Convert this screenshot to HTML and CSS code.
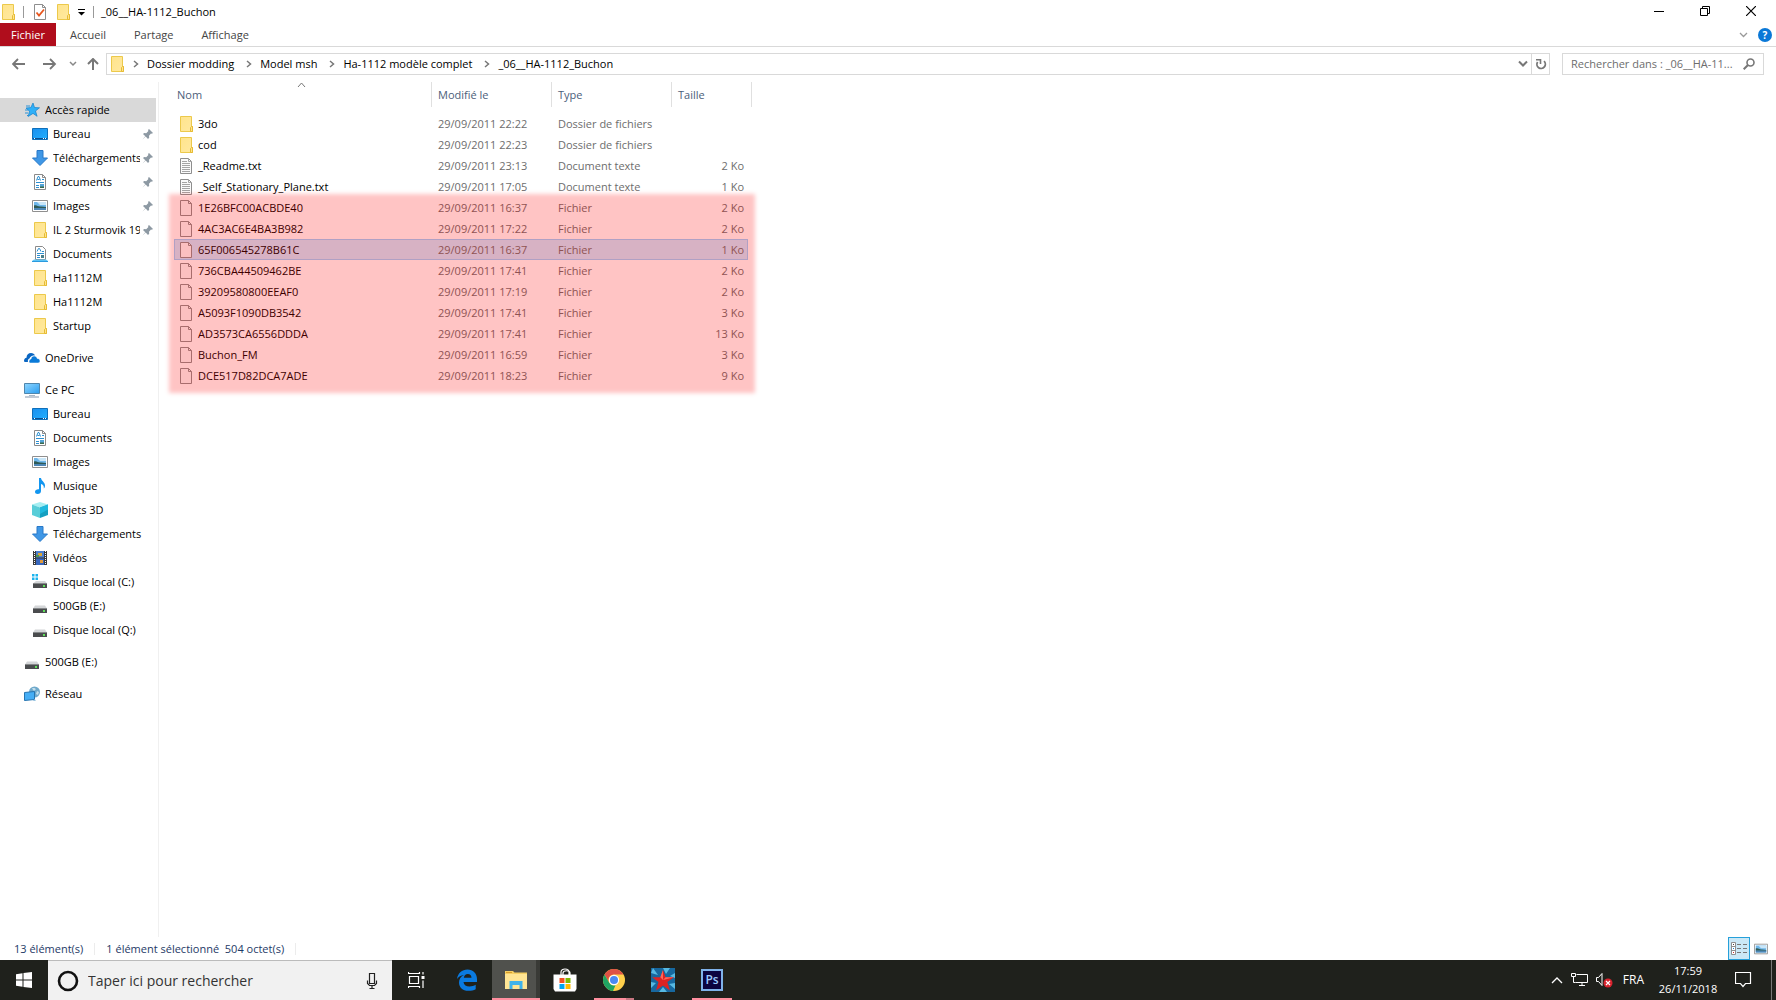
FILE: index.html
```
<!DOCTYPE html>
<html lang="fr">
<head>
    <meta charset="UTF-8">
    <meta name="viewport" content="width=device-width, initial-scale=1.0">
    <title>_06__HA-1112_Buchon</title>
    <link rel="stylesheet" href="styles.css">
</head>
<body>
    <!-- shared icons -->
    <svg class="sprite" aria-hidden="true">
        <defs>
            <linearGradient id="g-folder" x1="0" y1="0" x2="1" y2="1"><stop offset="0" stop-color="#ffe48c"/><stop offset="1" stop-color="#ffe9a0"/></linearGradient>
            <linearGradient id="g-screen" x1="0" y1="0" x2="1" y2="1"><stop offset="0" stop-color="#1a8fee"/><stop offset="1" stop-color="#22b0ff"/></linearGradient>
            <linearGradient id="g-pc" x1="0" y1="0" x2="1" y2="1"><stop offset="0" stop-color="#8fd6ff"/><stop offset="1" stop-color="#2a9df0"/></linearGradient>
        </defs>
        <symbol id="folder" viewBox="0 0 16 16">
            <path d="M2.5.5h11v10h1v5h-12z" fill="url(#g-folder)" stroke="#ecc94b"/>
            <path d="M12.5 15.5v-4l1-1h1v5z" fill="#ffe48c" stroke="#e6bb35"/>
        </symbol>
        <symbol id="file" viewBox="0 0 16 16">
            <path d="M2.5.5h8l3 3v12h-11z" fill="#fafafa" stroke="#8e8e8e"/>
            <path d="M10.5.5v3h3" fill="none" stroke="#8e8e8e"/>
        </symbol>
        <symbol id="text" viewBox="0 0 16 16">
            <path d="M2.5.5h8l3 3v12h-11z" fill="#fafafa" stroke="#8e8e8e"/>
            <path d="M10.5.5v3h3M4 3.5h5M4 5.5h8M4 7.5h8M4 9.5h8M4 11.5h8M4 13.5h8" fill="none" stroke="#a4a4a4"/>
        </symbol>
        <symbol id="star" viewBox="0 0 16 16">
            <path d="M9 1l1.500 4.500 5 .3-4 3.200 1.600 5.300L9 11.400 4.200 14.500l1.300-5.300L2 6l4.800-.4z" fill="#2fb0f8" stroke="#1680c8" stroke-width=".7"/>
            <path d="M2 4h4M1 8h3M1 11h3M3 13.500h1.500" stroke="#2d93d8" fill="none"/>
        </symbol>
        <symbol id="desktop" viewBox="0 0 16 16">
            <path d="M.5 2.500h15v11H.5z" fill="url(#g-screen)" stroke="#0f6fba"/>
            <path d="M1 12.500h14" stroke="#0a4f90"/>
            <path d="M2 12.500h1M11 12.500h1M13 12.500h1" stroke="#fff"/>
        </symbol>
        <symbol id="download" viewBox="0 0 16 16">
            <path d="M5 .5h6v7.500h4.500L8 15.500.5 8H5z" fill="#3f97e6" stroke="#2878c8"/>
        </symbol>
        <symbol id="document" viewBox="0 0 16 16">
            <path d="M2.500.5h8l3 3v12h-11z" fill="#fff" stroke="#8a8a8a"/>
            <path d="M10.500.5v3h3" fill="none" stroke="#8a8a8a"/>
            <path d="M4.500 6.500l1.500-4h1l1.500 4M5.500 5.500h2M10 5.500h2M4 8.500h8M4 11.500h3M4 13.500h3" fill="none" stroke="#2d8fd0"/>
            <path d="M8 10h4v4H8z" fill="#54a4d8"/><path d="M8 12.500h4V14H8z" fill="#3b6a4d"/>
        </symbol>
        <symbol id="document-lib" viewBox="0 0 16 16">
            <path d="M3.500.5h7l3 3v10h-10z" fill="#fff" stroke="#8a8a8a"/>
            <path d="M5 5.500l1.500-3h1l1.500 3M10 5.500h2M5 7.500h7M5 9.500h3M5 11.500h3" fill="none" stroke="#2d8fd0"/>
            <path d="M9 9h3v3H9z" fill="#4a7f8a"/>
            <path d="M2 13.500h12l2 1.500H0z" fill="#5cc4f6"/><path d="M0 15.500h16" stroke="#2b9ade"/>
        </symbol>
        <symbol id="picture" viewBox="0 0 16 16">
            <path d="M.5 2.500h15v11H.5z" fill="#fff" stroke="#8f8f8f"/>
            <path d="M2 4h12v8H2z" fill="#6fb7ea"/>
            <path d="M5 4h9v3H8z" fill="#c9e6f8"/>
            <path d="M2 7.500c3-1 4 1.500 7 1l5 .5v1H2z" fill="#2e5a56"/>
            <path d="M2 10h12v2H2z" fill="#4d86b5"/>
        </symbol>
        <symbol id="onedrive" viewBox="0 0 16 16">
            <path d="M0 11c0-2 1-3 2.500-3.200C2.500 5 4.500 3 7 3c2 0 3.500 1 4 2.500-3-.5-5 1-5.500 3C4 9 3.500 10.500 4 12H1.500C.5 12 0 11.500 0 11z" fill="#0a66c2"/>
            <path d="M5 11.500c0-1.500 1-2.500 2-2.500.2-2 1.600-3 3.200-3 1.500 0 2.600 1 3 2.500C15 8.500 16 9.500 16 11c0 1.300-.8 2-2 2H6.800C5.700 13 5 12.500 5 11.500z" fill="#0a7ad8" stroke="#fff" stroke-width=".5"/>
        </symbol>
        <symbol id="pc" viewBox="0 0 16 16">
            <path d="M.5 1.500h15v10H.5z" fill="url(#g-pc)" stroke="#4f86ad"/>
            <path d="M5 13h6v1H5z" fill="#a9b8c6"/>
            <path d="M1 15h14" stroke="#8496ac"/>
        </symbol>
        <symbol id="music" viewBox="0 0 16 16">
            <path d="M7 0h2c.3 3 4 4 4 7.500 0 1.500-.6 2.500-1.200 3 .4-2.500-.8-4-2.800-4.500v7c0 1.800-1.400 3-3.300 3C4 16 3 15.200 3 13.800 3 12 5 11 7 11.300z" fill="#1296f0"/>
        </symbol>
        <symbol id="cube" viewBox="0 0 16 16">
            <path d="M8 0l8 2.500-8 3-8-3z" fill="#a5eef2"/>
            <path d="M0 2.500l8 3V16l-8-3z" fill="#58cdd8"/>
            <path d="M16 2.500l-8 3V16l8-3z" fill="#159fc0"/>
            <path d="M8 5.500l8-3v5L8 12z" fill="#1fb9de"/>
        </symbol>
        <symbol id="video" viewBox="0 0 16 16">
            <path d="M1 1h14v14H1z" fill="#3a3a3a"/>
            <path d="M4 1h8v6.500H4z" fill="#4c7fd0"/><path d="M4 8.500h8V15H4z" fill="#3766bd"/>
            <path d="M6 3h4v3H6z" fill="#d9a536"/><path d="M4 5h3v2H4z" fill="#4b9850"/><path d="M8 10h3v3H8z" fill="#e09a3e"/>
            <path d="M2.500 1v14M13.500 1v14" stroke="#fff" stroke-dasharray="1 1"/>
        </symbol>
        <symbol id="drive" viewBox="0 0 16 16">
            <path d="M3 7.500h10l2 3H1z" fill="#d4d6d8"/>
            <path d="M1 10.500h14V15H1z" fill="#4a4c4e"/>
            <path d="M1 10.500h14" stroke="#85888a"/>
            <path d="M11 12h2v2h-2z" fill="#5fe05a"/>
        </symbol>
        <symbol id="drive-win" viewBox="0 0 16 16">
            <path d="M4 7h9l2 2.500H1z" fill="#d4d6d8"/>
            <path d="M1 9.500h14V14H1z" fill="#4a4c4e"/>
            <path d="M1 9.500h14" stroke="#85888a"/>
            <path d="M11 11h2v2h-2z" fill="#5fe05a"/>
            <path d="M0 0h2.500v2.500H0zM3.500 0H6v2.500H3.500zM0 3.500h2.500V6H0zM3.500 3.500H6V6H3.500z" fill="#1cb4ee"/>
        </symbol>
        <symbol id="network" viewBox="0 0 16 16">
            <circle cx="10.500" cy="6" r="5.500" fill="#6fa9cb"/>
            <path d="M8 2.500c2-1 3 0 4 .5l-2 2zM13 5l2 1-1 3-2-1z" fill="#c5dfec"/>
            <path d="M.5 6.500l10-1v8l-10 1z" fill="#45aef5" stroke="#2674b0"/>
            <path d="M10.500 13l1.500 1.500-3 .5" fill="#7ab2d8"/>
        </symbol>
        <symbol id="pin" viewBox="0 0 12 12">
            <path d="M7 1l4 4-1.200.8L9 5.600 7 7.800l.2 2L6 11 3.700 8.600.5 11.500l2.800-3.300L1 6l1.200-1 2 .2L6.400 3 6 2z" fill="#8d99a3"/>
        </symbol>
        <symbol id="chevron" viewBox="0 0 6 8">
            <path d="M1 1l3.500 3L1 7" fill="none" stroke="#777" stroke-width="1.500"/>
        </symbol>
    </svg>

    <div class="explorer">
        <header class="titlebar">
            <div class="quick-access">
                <svg class="icon"><use href="#folder"/></svg>
                <span class="bar"></span>
                <button class="plain" aria-label="Propriétés">
                    <svg class="icon" viewBox="0 0 16 16"><path d="M2.500.5h8l3 3v12h-11z" fill="#fff" stroke="#8e8e8e"/><path d="M10.500.5v3h3" fill="none" stroke="#8e8e8e"/><path d="M4.500 8.500l2.500 3 5-6" fill="none" stroke="#e8561e" stroke-width="1.800"/></svg>
                </button>
                <button class="plain" aria-label="Nouveau dossier"><svg class="icon"><use href="#folder"/></svg></button>
                <button class="plain" aria-label="Personnaliser">
                    <svg width="8" height="8" viewBox="0 0 8 8"><path d="M0 1.500h7" stroke="#000"/><path d="M0 4h7L3.500 7.500z"/></svg>
                </button>
                <span class="bar"></span>
            </div>
            <h1>_06__HA-1112_Buchon</h1>
            <div class="window-buttons">
                <button aria-label="Réduire"><svg width="10" height="10"><path d="M0 5.500h10" stroke="#000"/></svg></button>
                <button aria-label="Restaurer"><svg width="10" height="10"><path d="M.5 2.500h7v7h-7zM2.500 2.500v-2h7v7h-2" fill="none" stroke="#000"/></svg></button>
                <button aria-label="Fermer"><svg width="10" height="10"><path d="M0 0l10 10M10 0L0 10" stroke="#000" stroke-width="1.200"/></svg></button>
            </div>
        </header>

        <div class="ribbon">
            <button class="tab file-tab">Fichier</button>
            <button class="tab">Accueil</button>
            <button class="tab">Partage</button>
            <button class="tab">Affichage</button>
            <div class="ribbon-right">
                <button class="plain" aria-label="Développer le ruban"><svg width="9" height="6"><path d="M1 1l3.500 3.500L8 1" fill="none" stroke="#999" stroke-width="1.300"/></svg></button>
                <button class="help" aria-label="Aide">?</button>
            </div>
        </div>

        <div class="address-row">
            <div class="arrows">
                <button class="plain" aria-label="Précédent"><svg width="14" height="12"><path d="M1 6h12M6 1L1 6l5 5" fill="none" stroke="#777" stroke-width="1.800"/></svg></button>
                <button class="plain" aria-label="Suivant"><svg width="14" height="12"><path d="M0 6h12M7 1l5 5-5 5" fill="none" stroke="#777" stroke-width="1.800"/></svg></button>
                <button class="plain" aria-label="Emplacements récents"><svg width="8" height="6"><path d="M1 1l3 3 3-3" fill="none" stroke="#888" stroke-width="1.500"/></svg></button>
                <button class="plain" aria-label="Dossier parent"><svg width="12" height="12"><path d="M6 12V1M1 6l5-5 5 5" fill="none" stroke="#777" stroke-width="2"/></svg></button>
            </div>
            <div class="address">
                <svg class="icon"><use href="#folder"/></svg>
                <svg class="chevron"><use href="#chevron"/></svg>
                <a href="#">Dossier modding</a>
                <svg class="chevron"><use href="#chevron"/></svg>
                <a href="#">Model msh</a>
                <svg class="chevron"><use href="#chevron"/></svg>
                <a href="#">Ha-1112 modèle complet</a>
                <svg class="chevron"><use href="#chevron"/></svg>
                <a href="#">_06__HA-1112_Buchon</a>
                <button class="plain history" aria-label="Historique"><svg width="10" height="8"><path d="M1 1.500l4 4 4-4" fill="none" stroke="#777" stroke-width="2"/></svg></button>
                <button class="plain refresh" aria-label="Actualiser"><svg width="12" height="12"><path d="M9 3.200A4.200 4.200 0 1 1 2.600 4" fill="none" stroke="#777" stroke-width="1.800"/><path d="M1 1.800h4.500V6" fill="none" stroke="#777" stroke-width="1.600"/></svg></button>
            </div>
            <div class="search">
                <input type="text" placeholder="Rechercher dans : _06__HA-11..." aria-label="Rechercher">
                <svg width="12" height="12"><circle cx="7.500" cy="4.500" r="3.500" fill="none" stroke="#777" stroke-width="1.600"/><path d="M5 7l-4.300 4.300" stroke="#777" stroke-width="2"/></svg>
            </div>
        </div>

        <div class="content">
            <nav class="sidebar">
                <ul>
                    <li><a class="root active" href="#"><svg class="icon"><use href="#star"/></svg><span>Accès rapide</span></a></li>
                    <li><a href="#"><svg class="icon"><use href="#desktop"/></svg><span>Bureau</span><svg class="pin"><use href="#pin"/></svg></a></li>
                    <li><a href="#"><svg class="icon"><use href="#download"/></svg><span>Téléchargements</span><svg class="pin"><use href="#pin"/></svg></a></li>
                    <li><a href="#"><svg class="icon"><use href="#document"/></svg><span>Documents</span><svg class="pin"><use href="#pin"/></svg></a></li>
                    <li><a href="#"><svg class="icon"><use href="#picture"/></svg><span>Images</span><svg class="pin"><use href="#pin"/></svg></a></li>
                    <li><a href="#"><svg class="icon"><use href="#folder"/></svg><span>IL 2 Sturmovik 19</span><svg class="pin"><use href="#pin"/></svg></a></li>
                    <li><a href="#"><svg class="icon"><use href="#document-lib"/></svg><span>Documents</span></a></li>
                    <li><a href="#"><svg class="icon"><use href="#folder"/></svg><span>Ha1112M</span></a></li>
                    <li><a href="#"><svg class="icon"><use href="#folder"/></svg><span>Ha1112M</span></a></li>
                    <li><a href="#"><svg class="icon"><use href="#folder"/></svg><span>Startup</span></a></li>
                </ul>
                <ul>
                    <li><a class="root" href="#"><svg class="icon"><use href="#onedrive"/></svg><span>OneDrive</span></a></li>
                </ul>
                <ul>
                    <li><a class="root" href="#"><svg class="icon"><use href="#pc"/></svg><span>Ce PC</span></a></li>
                    <li><a href="#"><svg class="icon"><use href="#desktop"/></svg><span>Bureau</span></a></li>
                    <li><a href="#"><svg class="icon"><use href="#document"/></svg><span>Documents</span></a></li>
                    <li><a href="#"><svg class="icon"><use href="#picture"/></svg><span>Images</span></a></li>
                    <li><a href="#"><svg class="icon"><use href="#music"/></svg><span>Musique</span></a></li>
                    <li><a href="#"><svg class="icon"><use href="#cube"/></svg><span>Objets 3D</span></a></li>
                    <li><a href="#"><svg class="icon"><use href="#download"/></svg><span>Téléchargements</span></a></li>
                    <li><a href="#"><svg class="icon"><use href="#video"/></svg><span>Vidéos</span></a></li>
                    <li><a href="#"><svg class="icon"><use href="#drive-win"/></svg><span>Disque local (C:)</span></a></li>
                    <li><a href="#"><svg class="icon"><use href="#drive"/></svg><span>500GB (E:)</span></a></li>
                    <li><a href="#"><svg class="icon"><use href="#drive"/></svg><span>Disque local (Q:)</span></a></li>
                </ul>
                <ul>
                    <li><a class="root" href="#"><svg class="icon"><use href="#drive"/></svg><span>500GB (E:)</span></a></li>
                </ul>
                <ul>
                    <li><a class="root" href="#"><svg class="icon"><use href="#network"/></svg><span>Réseau</span></a></li>
                </ul>
            </nav>

            <main class="files">
                <table>
                    <colgroup><col class="col-name"><col class="col-date"><col class="col-type"><col class="col-size"><col class="col-end"></colgroup>
                    <thead>
                        <tr>
                            <th>Nom<svg class="sort" width="9" height="6"><path d="M1 5l3.500-4L8 5" fill="none" stroke="#777"/></svg></th>
                            <th>Modifié le</th>
                            <th>Type</th>
                            <th colspan="2">Taille</th>
                        </tr>
                    </thead>
                    <tbody>
                        <tr><td><svg class="icon"><use href="#folder"/></svg>3do</td><td>29/09/2011 22:22</td><td>Dossier de fichiers</td><td></td></tr>
                        <tr><td><svg class="icon"><use href="#folder"/></svg>cod</td><td>29/09/2011 22:23</td><td>Dossier de fichiers</td><td></td></tr>
                        <tr><td><svg class="icon"><use href="#text"/></svg>_Readme.txt</td><td>29/09/2011 23:13</td><td>Document texte</td><td>2 Ko</td></tr>
                        <tr><td><svg class="icon"><use href="#text"/></svg>_Self_Stationary_Plane.txt</td><td>29/09/2011 17:05</td><td>Document texte</td><td>1 Ko</td></tr>
                        <tr><td><svg class="icon"><use href="#file"/></svg>1E26BFC00ACBDE40</td><td>29/09/2011 16:37</td><td>Fichier</td><td>2 Ko</td></tr>
                        <tr><td><svg class="icon"><use href="#file"/></svg>4AC3AC6E4BA3B982</td><td>29/09/2011 17:22</td><td>Fichier</td><td>2 Ko</td></tr>
                        <tr class="selected"><td><svg class="icon"><use href="#file"/></svg>65F006545278B61C</td><td>29/09/2011 16:37</td><td>Fichier</td><td>1 Ko</td></tr>
                        <tr><td><svg class="icon"><use href="#file"/></svg>736CBA44509462BE</td><td>29/09/2011 17:41</td><td>Fichier</td><td>2 Ko</td></tr>
                        <tr><td><svg class="icon"><use href="#file"/></svg>39209580800EEAF0</td><td>29/09/2011 17:19</td><td>Fichier</td><td>2 Ko</td></tr>
                        <tr><td><svg class="icon"><use href="#file"/></svg>A5093F1090DB3542</td><td>29/09/2011 17:41</td><td>Fichier</td><td>3 Ko</td></tr>
                        <tr><td><svg class="icon"><use href="#file"/></svg>AD3573CA6556DDDA</td><td>29/09/2011 17:41</td><td>Fichier</td><td>13 Ko</td></tr>
                        <tr><td><svg class="icon"><use href="#file"/></svg>Buchon_FM</td><td>29/09/2011 16:59</td><td>Fichier</td><td>3 Ko</td></tr>
                        <tr><td><svg class="icon"><use href="#file"/></svg>DCE517D82DCA7ADE</td><td>29/09/2011 18:23</td><td>Fichier</td><td>9 Ko</td></tr>
                    </tbody>
                </table>
                <div class="highlight"></div>
            </main>
        </div>

        <footer class="status">
            <span>13 élément(s)</span>
            <span class="selection">1 élément sélectionné&nbsp; 504 octet(s)</span>
            <div class="views">
                <button class="view on" aria-label="Détails"><svg width="16" height="13"><path d="M.5.5h4v12h-4zM.5 4.500h4M.5 8.500h4" fill="#fff" stroke="#8f8f8f"/><path d="M6 2.500h4M12 2.500h4M6 6.500h4M12 6.500h4M6 10.500h4M12 10.500h4" stroke="#777"/><path d="M2 2h1v1H2z" fill="#444"/><path d="M2 6h1v1H2z" fill="#1d7fd0"/><path d="M2 10h1v1H2z" fill="#d03030"/></svg></button>
                <button class="view" aria-label="Grandes icônes"><svg width="14" height="14" viewBox="0 0 16 16"><use href="#picture"/></svg></button>
            </div>
        </footer>
    </div>

    <div class="taskbar">
        <button class="start" aria-label="Démarrer"><svg width="16" height="16"><path d="M0 2.200L6.500 1.300v6.200H0zM7.500 1.100L16 0v7.500H7.500zM0 8.500h6.500v6.200L0 13.800zM7.500 8.500H16V16l-8.500-1.100z" fill="#fff"/></svg></button>
        <div class="cortana">
            <svg width="22" height="22"><circle cx="11" cy="11" r="9" fill="none" stroke="#111" stroke-width="2.600"/></svg>
            <input type="text" placeholder="Taper ici pour rechercher" aria-label="Taper ici pour rechercher">
            <svg width="12" height="18"><path d="M3.500 1.500h5v10h-5zM1.500 8.500v3l2 2h5l2-2v-3M6 13.500v3M3.500 16.500h5" fill="none" stroke="#222" stroke-width="1.200"/></svg>
        </div>
        <div class="apps">
            <button class="app task-view" aria-label="Affichage des tâches"><svg width="17" height="16"><path d="M1.500 4.500h9v7h-9zM.5 0v1.500h11V0M.5 16v-1.500h11V16M15 0v2.500M15 8.500V16" fill="none" stroke="#fff" stroke-width="1.200"/><path d="M13.500 4h3v3h-3z" fill="#fff"/></svg></button>
            <button class="app" aria-label="Edge"><svg width="22" height="22"><path d="M1 10C2 4 6 .5 11.500.5 17 .5 21 4.500 21 10v3H7.500c.3 3 2.800 4.500 6 4.500 2.300 0 4.500-.7 6.200-1.700v4.500c-2 1-4.400 1.500-7.200 1.500C6.500 21.800 3 18.300 3 13.500c0-3.300 1.800-6 5-7.500C4.800 6.200 2.500 7.700 1 10zm6.800-1.200h7.700c0-2.500-1.400-3.900-3.700-3.900-2.200 0-3.600 1.500-4 3.900z" fill="#0a7ae0"/></svg></button>
            <button class="app open current stacked" aria-label="Explorateur"><svg width="22" height="18"><path d="M0 0h8l1.500 1.500H22V18H0z" fill="#f5cf63"/><path d="M0 3h22v15H0z" fill="#ffe594"/><path d="M1 1h6v1H1z" fill="#d89b2a"/><path d="M4.500 18v-8h13v8h-3v-4h-7v4z" fill="#3fb3ea"/></svg></button>
            <button class="app" aria-label="Store"><svg width="24" height="24"><path d="M8 7V4c0-4 8-4 8 0v3M10 7V5c0-3 7-3 7 0v2" fill="none" stroke="#fff" stroke-width="1.200"/><path d="M.5 6.500h23V21L22 23.500H2L.5 21z" fill="#fff"/><path d="M6.500 10h5v5h-5z" fill="#f25022"/><path d="M12.500 10h5v5h-5z" fill="#7fba00"/><path d="M6.500 16h5v5h-5z" fill="#00a4ef"/><path d="M12.500 16h5v5h-5z" fill="#ffb900"/></svg></button>
            <button class="app open stacked narrow" aria-label="Chrome"><svg width="22" height="22"><circle cx="11" cy="11" r="11" fill="#ffd04b"/><path d="M1.500 5.500A11 11 0 0 1 20.500 5.500H11A5.500 5.500 0 0 0 6 13.500z" fill="#de5246"/><path d="M1.500 5.500l4.700 8.200a5.500 5.500 0 0 0 6.300 2.600L10 22A11 11 0 0 1 1.500 5.500z" fill="#1fa463"/><circle cx="11" cy="11" r="5.200" fill="#fff"/><circle cx="11" cy="11" r="4" fill="#4a89f3"/></svg></button>
            <button class="app" aria-label="IL-2 Sturmovik"><svg width="24" height="24"><path d="M0 0h24v24H0z" fill="#17689f"/><path d="M2 0l5 7-7-2zM12 0l3 6 4-6zM24 5l-5 3 5 2zM0 14l5 1-5 5zM24 15l-6 1 6 5zM8 24l4-5 4 5z" fill="#57b9e2"/><path d="M12 2l2.600 7.200 8.400.1-6.700 4.800 2.700 8.400L12 17.500 5 22.500l2.500-8.400L1 9.300l8.300-.1z" fill="#dc2323"/><path d="M12 2v10l-2.700-2.800zM23 9.300L12 12l2.600-2.800z" fill="#ff665a"/></svg></button>
            <button class="app open narrow" aria-label="Photoshop"><span class="ps">Ps</span></button>
        </div>
        <div class="tray">
            <button class="plain" aria-label="Icônes cachées"><svg width="12" height="8"><path d="M1 7l5-5 5 5" fill="none" stroke="#fff" stroke-width="1.300"/></svg></button>
            <button class="plain" aria-label="Réseau"><svg width="17" height="14"><path d="M5.500 1.500h11v8H4.500M8 12.500h6M11 10v2.500M.5.500h4v3h-4zM2.500 3.500v6h2" fill="none" stroke="#fff"/></svg></button>
            <button class="plain" aria-label="Volume"><svg width="17" height="15"><path d="M.5 4.500h2l3.500-4v12l-3.500-4h-2z" fill="none" stroke="#fff"/><circle cx="12" cy="10" r="4.500" fill="#d9232e"/><path d="M10 8l4 4M14 8l-4 4" stroke="#fff" stroke-width="1.200"/></svg></button>
            <button class="plain lang">FRA</button>
            <button class="plain clock"><time>17:59</time><time>26/11/2018</time></button>
            <button class="plain notif" aria-label="Notifications"><svg width="17" height="16"><path d="M.5.5h15v11h-5L8 14.500 5.500 11.500h-5z" fill="none" stroke="#fff" stroke-width="1.200"/></svg></button>
            <button class="show-desktop" aria-label="Afficher le bureau"></button>
        </div>
    </div>
</body>
</html>
```
FILE: styles.css
```
* { box-sizing: border-box; }

body {
    display: flex;
    flex-direction: column;
    height: 100vh;
    margin: 0;
    overflow: hidden;
    background: #fff;
    color: #000;
    font-family: "Open Sans", "Noto Sans", sans-serif;
    font-size: 11px;
    line-height: 16px;
}

button, input { font: inherit; color: inherit; }
button { padding: 0; border: none; background: none; }
a { color: inherit; text-decoration: none; }
svg { display: block; flex: none; }
.sprite { position: absolute; width: 0; height: 0; }
.icon { width: 16px; height: 16px; }
.plain { display: flex; align-items: center; justify-content: center; }

.explorer {
    display: flex;
    flex-direction: column;
    flex: 1;
    min-height: 0;
}

/* title bar */
.titlebar { display: flex; align-items: center; height: 23px; }
.quick-access { display: flex; align-items: center; gap: 7px; }
.quick-access .bar { width: 1px; height: 12px; background: #999; }
.quick-access .bar + .plain { margin-left: 1px; }
.titlebar h1 { margin: 0 0 0 7px; font-size: 11px; font-weight: normal; }
.window-buttons { display: flex; margin: 0 2px 2px auto; }
.window-buttons button {
    display: flex;
    align-items: center;
    justify-content: center;
    width: 46px;
    height: 20px;
}

/* ribbon */
.ribbon {
    display: flex;
    height: 24px;
    border-bottom: 1px solid #d9d9d9;
}
.tab { padding: 0 14px; color: #444; }
.file-tab { width: 56px; padding: 0; background: #b00d1c; color: #fff; }
.ribbon-right { display: flex; align-items: center; gap: 10px; margin: 0 4px 0 auto; }
.help {
    width: 14px;
    height: 14px;
    border-radius: 50%;
    background: #0a78d7;
    color: #fff;
    font-size: 10px;
    font-weight: bold;
    line-height: 14px;
}

/* address bar */
.address-row { display: flex; align-items: center; height: 35px; padding: 0 12px 2px; }
.arrows { display: flex; align-items: center; gap: 12px; width: 94px; }
.arrows .plain:nth-child(1) { margin-right: 5px; }
.arrows .plain:nth-child(4) { margin-left: -2px; }
.address {
    display: flex;
    align-items: center;
    flex: 1;
    gap: 8px;
    height: 22px;
    padding-left: 2px;
    border: 1px solid #d9d9d9;
}
.address a { margin-right: 4px; }
.address .chevron { width: 6px; height: 8px; }
.history { margin-left: auto; }
.refresh { align-self: stretch; width: 18px; margin-left: -5px; border-left: 1px solid #d9d9d9; }
.search {
    display: flex;
    align-items: center;
    width: 202px;
    height: 22px;
    margin-left: 12px;
    padding: 0 8px;
    border: 1px solid #d9d9d9;
}
.search input { flex: 1; min-width: 0; padding: 0; border: none; outline: none; background: none; }
.search input::placeholder { color: #6d6d6d; opacity: 1; }

/* navigation pane */
.content { display: flex; flex: 1; min-height: 0; }
.sidebar { width: 159px; padding: 16px 2px 0 0; border-right: 1px solid #f0f0f0; }
.sidebar ul { margin: 0 0 8px; padding: 0; list-style: none; }
.sidebar a { display: flex; align-items: center; gap: 5px; height: 24px; padding: 0 2px 0 32px; }
.sidebar a.root { padding-left: 24px; }
.sidebar a.active { background: #d9d9d9; }
.sidebar span { flex: 1; overflow: hidden; white-space: nowrap; }
.sidebar .pin { width: 12px; height: 12px; margin-left: -3px; }

/* file list */
.files { position: relative; flex: 1; padding-left: 15px; }
table { width: 578px; table-layout: fixed; border-spacing: 0; }
.col-name { width: 258px; }
.col-date, .col-type { width: 120px; }
.col-size { width: 76px; }
.col-end { width: 4px; }
th {
    position: relative;
    height: 25px;
    padding: 0 6px;
    border-right: 1px solid #e0e0e0;
    color: #4c607a;
    font-weight: normal;
    text-align: left;
}
th:first-child { padding-left: 3px; }
.sort { position: absolute; top: 0; left: 48%; }
tbody::before { content: ""; display: block; height: 6px; }
td { height: 21px; padding: 0 6px; color: #6d6d6d; white-space: nowrap; }
td:first-child { display: flex; align-items: center; gap: 4px; padding-left: 4px; color: #000; }
td:nth-child(4) { padding-right: 4px; text-align: right; }
.selected td { background: #cce8ff; box-shadow: inset 0 1px #99d1ff, inset 0 -1px #99d1ff; }
.selected td:first-child { box-shadow: inset 1px 1px #99d1ff, inset 0 -1px #99d1ff; }
.selected td:last-child { box-shadow: inset 0 1px #99d1ff, inset -1px -1px #99d1ff; }

/* red marker over the undecoded files */
.highlight {
    position: absolute;
    top: 112px;
    left: 10px;
    width: 586px;
    height: 199px;
    background: rgba(255, 0, 0, 0.23);
    filter: blur(2px);
    pointer-events: none;
}

/* status bar */
.status { display: flex; align-items: center; height: 23px; padding-left: 14px; color: #1e3a66; }
.status span { padding-right: 11px; border-right: 1px solid #ececec; line-height: 12px; }
.status .selection { padding-left: 11px; }
.views { display: flex; margin: 0 5px 0 auto; }
.view { display: flex; align-items: center; justify-content: center; width: 21px; height: 23px; }
.view.on { width: 22px; border: 1px solid #26a0da; background: #cbe8f6; }

/* taskbar */
.taskbar { display: flex; height: 40px; background: #1f211c; color: #fff; }
.start { display: flex; align-items: center; justify-content: center; width: 48px; }
.cortana {
    display: flex;
    align-items: center;
    gap: 9px;
    width: 344px;
    padding: 0 14px 0 9px;
    border-top: 1px solid #bbb;
    background: #f1f1f1;
}
.cortana input {
    flex: 1;
    min-width: 0;
    padding: 0;
    border: none;
    outline: none;
    background: none;
    font-size: 14px;
}
.cortana input::placeholder { color: #333; opacity: 1; }
.apps { display: flex; gap: 1px; }
.app { position: relative; display: flex; align-items: center; justify-content: center; width: 48px; }
.task-view { width: 48px; margin-right: 2px; }
.current { background: linear-gradient(90deg, #50514d 44px, #393a36 44px); }
.open::after {
    content: "";
    position: absolute;
    right: 0;
    bottom: 0;
    left: 0;
    height: 2px;
    background: #ff8f9f;
}
.narrow::after { right: 4px; left: 4px; }
.stacked::after { background: linear-gradient(90deg, #ff8f9f 80%, #c97782 80%); }
.current::after { background: #ff8f9f; }
.ps {
    width: 22px;
    height: 22px;
    border: 2px solid #7fb2ea;
    background: #0c0440;
    color: #9ccbff;
    font-size: 12px;
    font-weight: 600;
    line-height: 17px;
}
.tray { display: flex; align-items: center; gap: 8px; margin-left: auto; }
.lang { margin-left: 2px; font-size: 12px; }
.clock { flex-direction: column; width: 72px; gap: 2px; }
.notif { margin: 0 11px 0 3px; }
.show-desktop { width: 5px; height: 40px; border-left: 1px solid #777; }
```
